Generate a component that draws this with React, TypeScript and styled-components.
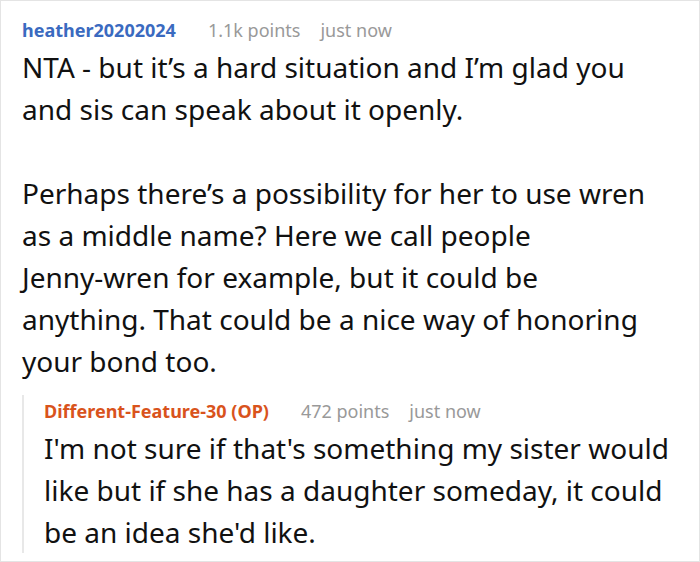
import type { ReactNode } from "react";
import { createGlobalStyle, styled } from "styled-components";

const GlobalStyle = createGlobalStyle`
    html, body {
        margin: 0;
        padding: 0;
        background: #ffffff;
    }
    body {
        font-family: "Noto Sans", "Open Sans", sans-serif;
    }
`;

const Frame = styled.div`
    box-sizing: border-box;
    width: 700px;
    height: 562px;
    border: 1px solid #e4e4e4;
    padding: 13px 0 0 21px;
    overflow: hidden;
`;

const Comment = styled.div`
    display: flex;
    flex-direction: column;
`;

const Meta = styled.div`
    display: flex;
    align-items: baseline;
    font-size: 18px;
    line-height: 32px;
    white-space: nowrap;
`;

const Author = styled.span<{ $color: string }>`
    font-weight: 700;
    color: ${(p) => p.$color};
    margin-right: 32px;
`;

const Info = styled.span`
    color: #999999;
    margin-right: 20px;
`;

const Body = styled.div<{ $width: number }>`
    width: ${(p) => p.$width}px;
    font-size: 28px;
    line-height: 42px;
    color: #111111;

    p {
        margin: 0;
    }
    p + p {
        margin-top: 42px;
    }
`;

const NoBreak = styled.span`
    white-space: nowrap;
`;

const Reply = styled.div`
    margin-top: 13px;
    border-left: 2px solid #e8e8e8;
    padding-left: 20px;
`;

type CommentProps = {
    author: string;
    color: string;
    points: string;
    time: string;
    width: number;
    paragraphs: ReactNode[];
};

const CommentBlock = ({ author, color, points, time, width, paragraphs }: CommentProps) => (
    <Comment>
        <Meta>
            <Author $color={color}>{author}</Author>
            <Info>{points}</Info>
            <Info>{time}</Info>
        </Meta>
        <Body $width={width}>
            {paragraphs.map((t, i) => (
                <p key={i}>{t}</p>
            ))}
        </Body>
    </Comment>
);

export default function App() {
    return (
        <>
            <GlobalStyle />
            <Frame>
                <CommentBlock
                    author="heather20202024"
                    color="#3a6ac0"
                    points="1.1k points"
                    time="just now"
                    width={628}
                    paragraphs={[
                        "NTA - but it’s a hard situation and I’m glad you and sis can speak about it openly.",
                        <>
                            Perhaps there’s a possibility for her to use wren as a middle name? Here we
                            call people <NoBreak>Jenny-wren</NoBreak> for example, but it could be
                            anything. That could be a nice way of honoring your bond too.
                        </>,
                    ]}
                />
                <Reply>
                    <CommentBlock
                        author="Different-Feature-30 (OP)"
                        color="#d9531c"
                        points="472 points"
                        time="just now"
                        width={630}
                        paragraphs={[
                            "I'm not sure if that's something my sister would like but if she has a daughter someday, it could be an idea she'd like.",
                        ]}
                    />
                </Reply>
            </Frame>
        </>
    );
}
